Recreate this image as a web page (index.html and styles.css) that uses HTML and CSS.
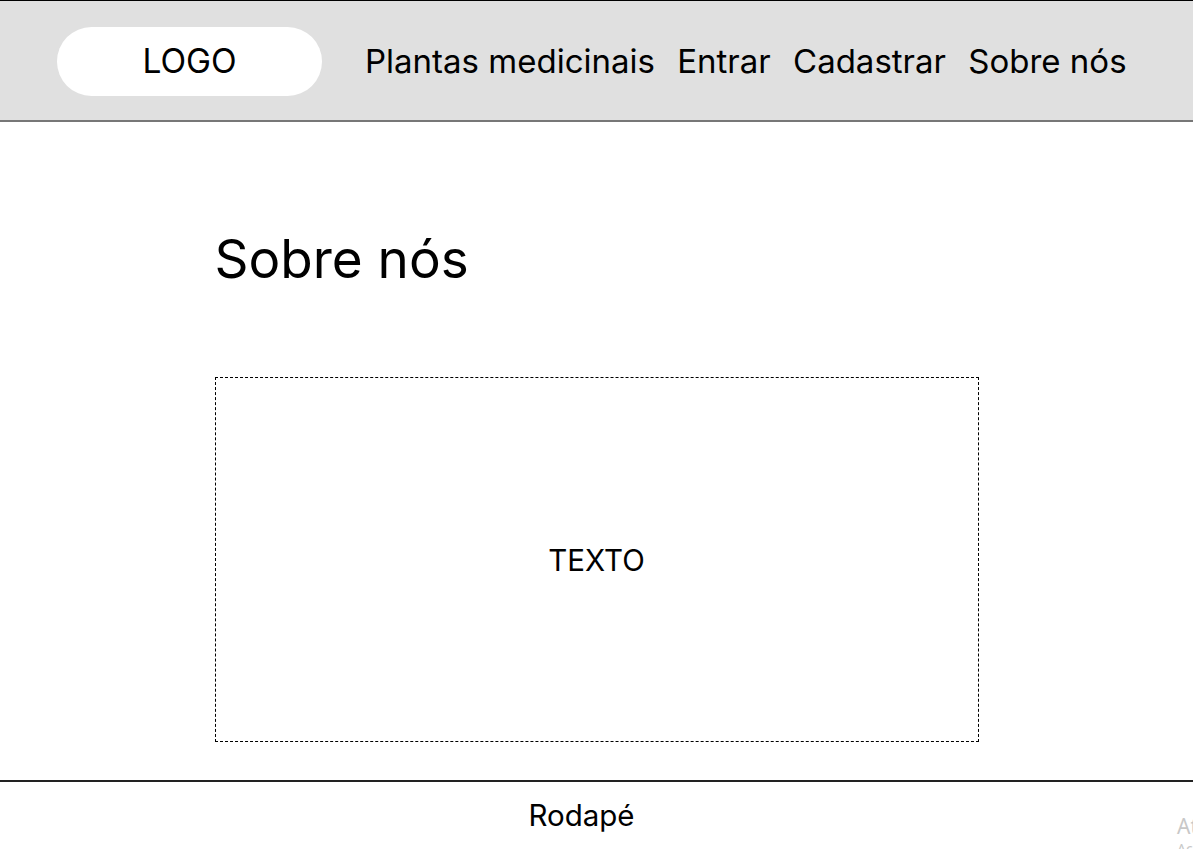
FILE: index.html
```html
<!DOCTYPE html>
<html lang="pt-BR">
<head>
<meta charset="utf-8">
<title>Sobre nós</title>
<link rel="stylesheet" href="styles.css">
</head>
<body>
<header class="topbar">
  <div class="logo">LOGO</div>
  <nav class="nav">
    <a href="#">Plantas medicinais</a>
    <a href="#">Entrar</a>
    <a href="#">Cadastrar</a>
    <a href="#">Sobre nós</a>
  </nav>
</header>
<main class="content">
  <h1 class="title">Sobre nós</h1>
  <section class="textbox">TEXTO</section>
</main>
<footer class="footer">
  <span class="footer-text">Rodapé</span>
</footer>
<div class="watermark">
  <div class="wm-title">Ativar o Windows</div>
  <div class="wm-sub">Acesse Configurações para ativar o Windows.</div>
</div>
</body>
</html>
```

FILE: styles.css
```css
* { box-sizing: border-box; }
html, body { margin: 0; padding: 0; }
body {
  width: 1193px;
  height: 849px;
  overflow: hidden;
  position: relative;
  background: #fff;
  color: #000;
  font-family: Inter, "Noto Sans", sans-serif;
}
.topbar {
  height: 122px;
  background: #e0e0e0;
  border-top: 1px solid #000;
  border-bottom: 2px solid #777;
  display: flex;
  align-items: center;
  padding-left: 57px;
}
.logo {
  width: 265px;
  height: 69px;
  margin-top: 1px;
  background: #fff;
  border-radius: 35px;
  display: flex;
  align-items: center;
  justify-content: center;
  font-size: 33.5px;
}
.nav {
  display: flex;
  gap: 22.3px;
  margin-left: 43px;
}
.nav a {
  color: #000;
  text-decoration: none;
  font-size: 33px;
}
.content {
  width: 764px;
  margin: 0 auto;
  padding-top: 105px;
  height: 658px;
}
.title {
  margin: 0 0 86px 0;
  font-weight: 400;
  font-size: 53px;
  line-height: 64px;
}
.textbox {
  height: 365px;
  border: 1px dashed #000;
  display: flex;
  align-items: center;
  justify-content: center;
  font-size: 29.5px;
}
.footer {
  border-top: 2px solid #222;
  display: flex;
  justify-content: center;
  padding-top: 15px;
  padding-right: 30px;
}
.footer-text {
  font-size: 29.5px;
}
.watermark {
  position: absolute;
  left: 1177px;
  top: 812px;
  color: #c8c8c8;
  white-space: nowrap;
  font-family: "Noto Sans", sans-serif;
}
.wm-title { font-size: 21px; line-height: 28px; }
.wm-sub { font-size: 14px; line-height: 18px; }
```
